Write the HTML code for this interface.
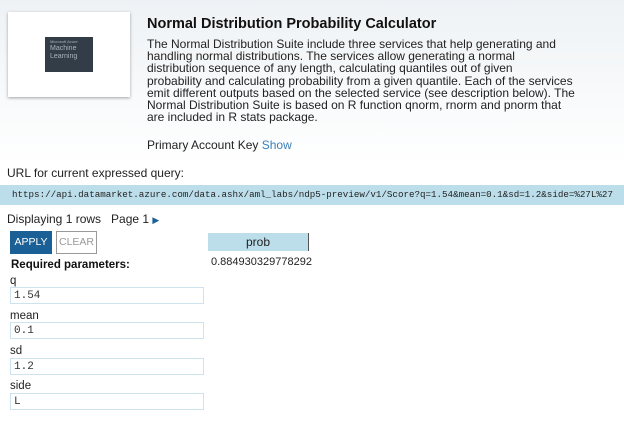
<!DOCTYPE html><html><head><style>
body{margin:0;width:624px;height:437px;background:#fff;font-family:"Liberation Sans",sans-serif;color:#222;position:relative;overflow:hidden}
.a{position:absolute}
.hdr{left:0;top:0;width:624px;height:165px;background:linear-gradient(#eef2f5,#fff)}
.card{left:8px;top:12px;width:122px;height:85px;background:#fff;box-shadow:0 1px 3px rgba(0,0,0,.35)}
.logo{left:45px;top:37px;width:48px;height:35px;background:#333d47;color:#aab4bd;font-size:7px;line-height:8px;padding:0 0 0 5px;box-sizing:border-box}
.t{font-size:12px;line-height:12.2px;white-space:nowrap}
input{position:absolute;left:10px;width:194px;height:17px;box-sizing:border-box;border:1px solid #cde3ee;font-family:"Liberation Mono",monospace;font-size:11px;padding:0 3px;color:#333}
.lbl{font-size:11.5px;left:10px}
</style></head><body>
<div class="a hdr"></div>
<div class="a card"></div>
<div class="a logo"><div style="font-size:4px;line-height:6px;padding-top:2px">Microsoft Azure</div>Machine<br>Learning</div>
<div class="a" style="left:147px;top:16px;font-size:14.5px;font-weight:bold;color:#111">Normal Distribution Probability Calculator</div>
<div class="a t" style="left:147px;top:38px">The Normal Distribution Suite include three services that help generating and<br>handling normal distributions. The services allow generating a normal<br>distribution sequence of any length, calculating quantiles out of given<br>probability and calculating probability from a given quantile. Each of the services<br>emit different outputs based on the selected service (see description below). The<br>Normal Distribution Suite is based on R function qnorm, rnorm and pnorm that<br>are included in R stats package.</div>
<div class="a t" style="left:147px;top:139px">Primary Account Key <span style="color:#3a7fb8">Show</span></div>
<div class="a t" style="left:7px;top:167px">URL for current expressed query:</div>
<div class="a" style="left:0;top:185px;width:624px;height:20px;background:#bcdeeb"></div>
<div class="a" style="left:12px;top:189px;font-family:'Liberation Mono',monospace;font-size:9.2px;color:#222;white-space:nowrap">https://api.datamarket.azure.com/data.ashx/aml_labs/ndp5-preview/v1/Score?q=1.54&amp;mean=0.1&amp;sd=1.2&amp;side=%27L%27</div>
<div class="a t" style="left:7px;top:213px">Displaying 1 rows &nbsp; Page 1 <span style="color:#1a5f96;font-size:9px">&#9654;</span></div>
<div class="a" style="left:10px;top:231px;width:42px;height:23px;background:#1a5f96;color:#fff;font-size:10.5px;line-height:23px;text-align:center">APPLY</div>
<div class="a" style="left:56px;top:231px;width:41px;height:23px;box-sizing:border-box;border:1px solid #999;color:#999;font-size:10.5px;line-height:21px;text-align:center">CLEAR</div>
<div class="a" style="left:208px;top:233px;width:100px;height:18px;background:#bcdeeb;font-size:12px;line-height:18px;text-align:center;border-right:1px solid #555">prob</div>
<div class="a" style="left:211px;top:256px;font-size:11px">0.884930329778292</div>
<div class="a" style="left:11px;top:259px;font-size:11.5px;font-weight:bold;color:#111">Required parameters:</div>
<div class="a lbl" style="top:275px">q</div><input value="1.54" style="top:287px">
<div class="a lbl" style="top:310px">mean</div><input value="0.1" style="top:322px">
<div class="a lbl" style="top:345px">sd</div><input value="1.2" style="top:358px">
<div class="a lbl" style="top:380px">side</div><input value="L" style="top:393px">
</body></html>
